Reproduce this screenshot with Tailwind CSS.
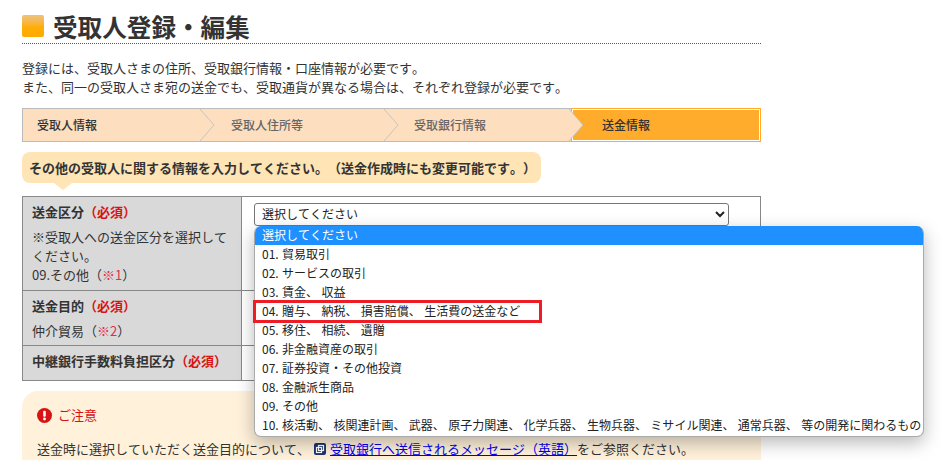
<!DOCTYPE html>
<html lang="ja">
<head>
  <meta charset="UTF-8" />
  <meta name="viewport" content="width=device-width, initial-scale=1" />
  <title>受取人登録・編集</title>
  <script src="https://cdn.jsdelivr.net/npm/@tailwindcss/browser@4"></script>
</head>
<body class="bg-white">
<div class="relative w-[944px] h-[460px] overflow-hidden font-['Noto_Sans_CJK_JP','Noto_Sans',sans-serif] text-[13px] text-[#333] [text-spacing-trim:space-all] [font-kerning:none]">
  <div class="w-[739px] ml-[22px]">

    <!-- 見出し -->
    <div class="h-[44px] pt-[15px] border-b border-dotted border-[#555] flex items-start gap-[9px]">
      <span class="w-[22px] h-[22px] rounded-[2px] bg-gradient-to-b from-[#eac47a] via-[#ffae0a] to-[#ffaa00]"></span>
      <h1 class="text-[24.6px] leading-[22px] font-bold text-[#333]">受取人登録・編集</h1>
    </div>

    <p class="mt-[14px] leading-[19px]">登録には、受取人さまの住所、受取銀行情報・口座情報が必要です。<br>また、同一の受取人さま宛の送金でも、受取通貨が異なる場合は、それぞれ登録が必要です。</p>

    <!-- ステップ -->
    <div class="mt-[12px] h-[34px] flex text-[12px] font-medium">
      <div class="relative w-[179px] bg-[#fddfc0] border border-r-0 border-[#bbb] pl-[14px] flex items-center text-[#333]">受取人情報
        <svg class="absolute right-[-14px] top-0 z-10" width="15" height="32" viewBox="0 0 15 32"><path d="M0 0 L14 16 L0 32" fill="#fddfc0" stroke="#c4c4c4"/></svg>
      </div>
      <div class="relative w-[184px] bg-[#fddfc0] border-y border-[#bbb] pl-[30px] flex items-center text-[#666]">受取人住所等
        <svg class="absolute right-[-14px] top-0 z-10" width="15" height="32" viewBox="0 0 15 32"><path d="M0 0 L14 16 L0 32" fill="#fddfc0" stroke="#c4c4c4"/></svg>
      </div>
      <div class="relative w-[186px] bg-[#fddfc0] border-y border-[#bbb] pl-[29px] flex items-center text-[#666]">受取銀行情報
        <svg class="absolute right-[-13px] top-0 z-10" width="15" height="32" viewBox="0 0 15 32"><path d="M0 0 L14 16 L0 32" fill="#fddfc0" stroke="#c4c4c4"/></svg>
      </div>
      <div class="flex-1 bg-[#ffab2b] border border-[#ffab2b] outline outline-1 outline-white -outline-offset-2 pl-[30px] flex items-center text-[#333]">送金情報</div>
    </div>

    <!-- 吹き出し -->
    <div class="relative mt-[10px] w-[519px] h-[31px] bg-[#ffe4b5] rounded-[8px] pl-[7px] flex items-center font-bold text-[13px]">
      その他の受取人に関する情報を入力してください。（送金作成時にも変更可能です。）
      <span class="absolute left-[32px] top-[31px] w-0 h-0 border-x-[9px] border-x-transparent border-t-[7px] border-t-[#ffe4b5]"></span>
    </div>

    <!-- フォーム -->
    <div class="mt-[13px] grid grid-cols-[219px_1fr] border border-[#888]">
      <div class="h-[94px] bg-[#d9d9d9] border-r border-b border-[#888] px-[9px] pt-[5px] leading-[19px]">
        <p class="font-bold">送金区分<span class="text-[#d81313]">（必須）</span></p>
        <p class="mt-[6px]">※受取人への送金区分を選択してください。<br>09.その他（<span class="text-[#e0304a]">※1</span>）</p>
      </div>
      <div class="h-[94px] border-b border-[#888] pl-[12px] pt-[6px]">
        <select class="w-[475px] h-[23px] border border-[#767676] rounded-[3px] bg-white pl-[3px] pb-[2px] text-[12px] text-[#222]">
          <option>選択してください</option>
        </select>
      </div>
      <div class="h-[55px] bg-[#d9d9d9] border-r border-b border-[#888] px-[9px] pt-[5px] leading-[19px]">
        <p class="font-bold">送金目的<span class="text-[#d81313]">（必須）</span></p>
        <p class="mt-[6px]">仲介貿易（<span class="text-[#e0304a]">※2</span>）</p>
      </div>
      <div class="h-[55px] border-b border-[#888]"></div>
      <div class="h-[34px] bg-[#d9d9d9] border-r border-[#888] px-[9px] pt-[5px] leading-[19px]">
        <p class="font-bold">中継銀行手数料負担区分<span class="text-[#d81313]">（必須）</span></p>
      </div>
      <div class="h-[34px]"></div>
    </div>

    <!-- ご注意 -->
    <div class="mt-[10px] h-[80px] bg-[#fff1da] rounded-tl-[16px] rounded-tr-[16px] pl-[15px] pt-[15px]">
      <div class="flex items-center gap-[6px] h-[18px] text-[#d81313]">
        <svg width="15" height="15" viewBox="0 0 15 15"><circle cx="7.5" cy="7.5" r="7.5" fill="#d81313"/><rect x="6.2" y="2.8" width="2.6" height="6" rx="1" fill="#fff"/><circle cx="7.5" cy="11" r="1.4" fill="#fff"/></svg>
        <span>ご注意</span>
      </div>
      <p class="mt-[15px] leading-[19px] flex items-center">送金時に選択していただく送金目的について、
        <svg class="ml-[4px] mr-[4px]" width="12" height="12" viewBox="0 0 12 12"><rect width="12" height="12" rx="2" fill="#1c3470"/><rect x="4.5" y="2.5" width="5" height="5" fill="none" stroke="#fff" stroke-width="1.2"/><rect x="2.5" y="4.5" width="5" height="5" fill="none" stroke="#fff" stroke-width="1.2"/></svg>
        <a href="#" class="text-[#0000ee] underline">受取銀行へ送信されるメッセージ（英語）</a>をご参照ください。</p>
    </div>
  </div>

  <!-- 開いたセレクトのリスト -->
  <ul class="absolute left-[254px] top-[226px] w-[670px] h-[211px] bg-white border border-[#aaa] border-t-0 rounded-[7px] overflow-hidden shadow-[0_6px_18px_rgba(0,0,0,0.28)] text-[12px] leading-[18px] [word-spacing:0.7px] text-[#222] whitespace-nowrap">
    <li class="h-[19px] pl-[7px] bg-[#1e90ff] text-white">選択してください</li>
    <li class="h-[19px] pl-[7px]">01. 貿易取引</li>
    <li class="h-[19px] pl-[7px]">02. サービスの取引</li>
    <li class="h-[19px] pl-[7px]">03. 賃金、 収益</li>
    <li class="h-[19px] pl-[7px]">04. 贈与、 納税、 損害賠償、 生活費の送金など</li>
    <li class="h-[19px] pl-[7px]">05. 移住、 相続、 遺贈</li>
    <li class="h-[19px] pl-[7px]">06. 非金融資産の取引</li>
    <li class="h-[19px] pl-[7px]">07. 証券投資・その他投資</li>
    <li class="h-[19px] pl-[7px]">08. 金融派生商品</li>
    <li class="h-[19px] pl-[7px]">09. その他</li>
    <li class="h-[19px] pl-[7px]">10. 核活動、 核関連計画、 武器、 原子力関連、 化学兵器、 生物兵器、 ミサイル関連、 通常兵器、 等の開発に関わるもの</li>
  </ul>

  <!-- 赤枠 -->
  <div class="absolute left-[253px] top-[300px] w-[289px] h-[23px] border-[3px] border-[#ee1c25]"></div>
</div>
</body>
</html>
